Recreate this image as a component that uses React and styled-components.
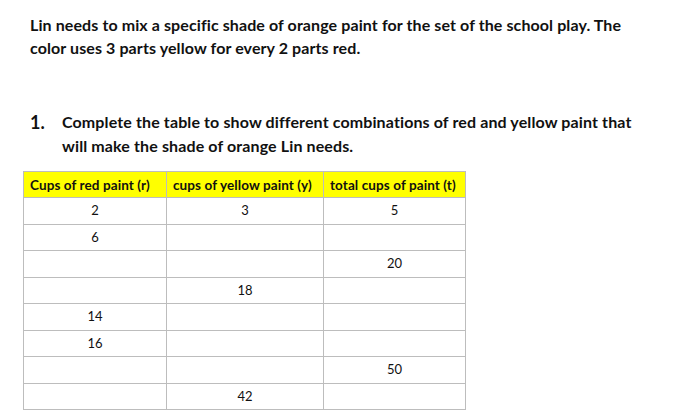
import React from "react";
import styled, { createGlobalStyle } from "styled-components";

const GlobalStyle = createGlobalStyle`
  html, body {
    margin: 0;
    padding: 0;
    background: #fff;
  }
  body {
    font-family: Lato, "Liberation Sans", sans-serif;
    color: #111;
  }
`;

const Page = styled.div`
  width: 679px;
  height: 418px;
  padding: 13px 0 0 30px;
  box-sizing: border-box;
  overflow: hidden;
`;

const Intro = styled.p`
  margin: 0;
  font-weight: 700;
  font-size: 16px;
  letter-spacing: 0.1px;
  line-height: 23px;
  white-space: nowrap;
`;

const Question = styled.div`
  display: flex;
  margin-top: 51px;
  font-weight: 700;
  font-size: 16px;
  letter-spacing: 0.12px;
  line-height: 24px;
  white-space: nowrap;
`;

const Number = styled.span`
  width: 32px;
  flex: none;
  font-size: 18px;
`;

const QuestionText = styled.p`
  margin: 0;
`;

const Table = styled.table`
  border-collapse: collapse;
  margin: 13px 0 0 -7px;
  table-layout: fixed;
`;

const HeadCell = styled.th`
  box-sizing: border-box;
  background: #ffff00;
  border: 1px solid #bdbdbd;
  height: 26px;
  padding: 0 0 0 6px;
  font-weight: 700;
  font-size: 13.5px;
  letter-spacing: 0.1px;
  text-align: left;
  white-space: nowrap;
`;

const Cell = styled.td`
  box-sizing: border-box;
  border: 1px solid #bdbdbd;
  height: 26.5px;
  padding: 0 0 1px;
  text-align: center;
  font-weight: 400;
  font-size: 13px;
`;

const rows = [
  ["2", "3", "5"],
  ["6", "", ""],
  ["", "", "20"],
  ["", "18", ""],
  ["14", "", ""],
  ["16", "", ""],
  ["", "", "50"],
  ["", "42", ""],
];

const widths = [143, 157, 142];

export default function App() {
  return (
    <Page>
      <GlobalStyle />
      <Intro>
        Lin needs to mix a specific shade of orange paint for the set of the school play. The
        <br />
        color uses 3 parts yellow for every 2 parts red.
      </Intro>
      <Question>
        <Number>1.</Number>
        <QuestionText>
          Complete the table to show different combinations of red and yellow paint that
          <br />
          will make the shade of orange Lin needs.
        </QuestionText>
      </Question>
      <Table>
        <colgroup>
          {widths.map((w, i) => (
            <col key={i} style={{ width: w }} />
          ))}
        </colgroup>
        <thead>
          <tr>
            <HeadCell>Cups of red paint (r)</HeadCell>
            <HeadCell>cups of yellow paint (y)</HeadCell>
            <HeadCell>total cups of paint (t)</HeadCell>
          </tr>
        </thead>
        <tbody>
          {rows.map((r, i) => (
            <tr key={i}>
              {r.map((v, j) => (
                <Cell key={j}>{v}</Cell>
              ))}
            </tr>
          ))}
        </tbody>
      </Table>
    </Page>
  );
}
